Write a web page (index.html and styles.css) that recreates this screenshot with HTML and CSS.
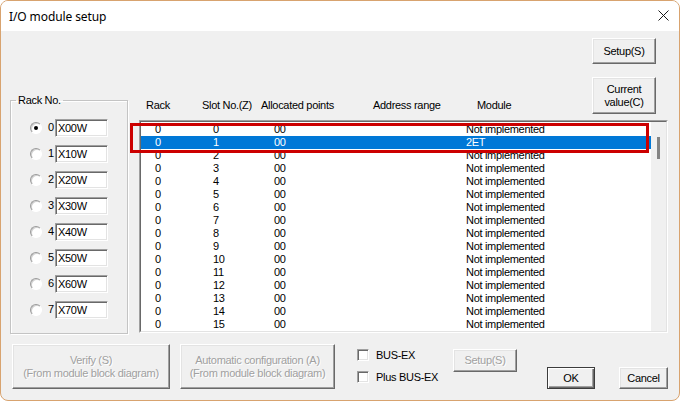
FILE: index.html
```html
<!DOCTYPE html>
<html>
<head>
<meta charset="utf-8">
<title>I/O module setup</title>
<link rel="stylesheet" href="styles.css">
</head>
<body>
<div class="window">
  <div class="titlebar">
    <span class="title">I/O module setup</span>
    <svg class="close" width="11" height="11" viewBox="0 0 11 11"><path d="M0.5 0.5 L10.5 10.5 M10.5 0.5 L0.5 10.5" stroke="#1a1a1a" stroke-width="1" fill="none"/></svg>
  </div>
  <div class="body">
    <div class="main-row">
      <fieldset class="rack-group">
        <legend>Rack No.</legend>
        <div class="rack-list">
          <div class="rack-row"><span class="radio checked"></span><span class="digit">0</span><span class="field">X00W</span></div>
          <div class="rack-row"><span class="radio"></span><span class="digit">1</span><span class="field">X10W</span></div>
          <div class="rack-row"><span class="radio"></span><span class="digit">2</span><span class="field">X20W</span></div>
          <div class="rack-row"><span class="radio"></span><span class="digit">3</span><span class="field">X30W</span></div>
          <div class="rack-row"><span class="radio"></span><span class="digit">4</span><span class="field">X40W</span></div>
          <div class="rack-row"><span class="radio"></span><span class="digit">5</span><span class="field">X50W</span></div>
          <div class="rack-row"><span class="radio"></span><span class="digit">6</span><span class="field">X60W</span></div>
          <div class="rack-row"><span class="radio"></span><span class="digit">7</span><span class="field">X70W</span></div>
        </div>
      </fieldset>
      <div class="main-col">
        <div class="top">
          <div class="header">
            <span>Rack</span><span>Slot No.(Z)</span><span>Allocated points</span><span>Address range</span><span>Module</span>
          </div>
          <div class="side-buttons">
            <button class="btn btn-setup">Setup(S)</button>
            <button class="btn btn-current">Current<br>value(C)</button>
          </div>
        </div>
        <div class="list">
          <div class="list-inner">
            <div class="rows">
              <div class="row"><span>0</span><span>0</span><span>00</span><span>Not implemented</span></div>
              <div class="row selected"><span>0</span><span>1</span><span>00</span><span>2ET</span></div>
              <div class="row"><span>0</span><span>2</span><span>00</span><span>Not implemented</span></div>
              <div class="row"><span>0</span><span>3</span><span>00</span><span>Not implemented</span></div>
              <div class="row"><span>0</span><span>4</span><span>00</span><span>Not implemented</span></div>
              <div class="row"><span>0</span><span>5</span><span>00</span><span>Not implemented</span></div>
              <div class="row"><span>0</span><span>6</span><span>00</span><span>Not implemented</span></div>
              <div class="row"><span>0</span><span>7</span><span>00</span><span>Not implemented</span></div>
              <div class="row"><span>0</span><span>8</span><span>00</span><span>Not implemented</span></div>
              <div class="row"><span>0</span><span>9</span><span>00</span><span>Not implemented</span></div>
              <div class="row"><span>0</span><span>10</span><span>00</span><span>Not implemented</span></div>
              <div class="row"><span>0</span><span>11</span><span>00</span><span>Not implemented</span></div>
              <div class="row"><span>0</span><span>12</span><span>00</span><span>Not implemented</span></div>
              <div class="row"><span>0</span><span>13</span><span>00</span><span>Not implemented</span></div>
              <div class="row"><span>0</span><span>14</span><span>00</span><span>Not implemented</span></div>
              <div class="row"><span>0</span><span>15</span><span>00</span><span>Not implemented</span></div>
            </div>
            <div class="scrollbar"><div class="thumb"></div></div>
          </div>
          <div class="mark"></div>
        </div>
      </div>
    </div>
    <div class="bottom-row">
      <button class="btn disabled btn-verify">Verify (S)<br>(From module block diagram)</button>
      <button class="btn disabled btn-auto">Automatic configuration (A)<br>(From module block diagram)</button>
      <div class="checks">
        <div class="check-row"><span class="checkbox"></span><span>BUS-EX</span></div>
        <div class="check-row"><span class="checkbox"></span><span>Plus BUS-EX</span></div>
      </div>
      <button class="btn disabled btn-setup2">Setup(S)</button>
      <button class="btn default btn-ok">OK</button>
      <button class="btn btn-cancel">Cancel</button>
    </div>
  </div>
</div>
</body>
</html>
```

FILE: styles.css
```css
html, body {
  margin: 0;
  padding: 0;
  background: #ffffff;
}

.window {
  width: 680px;
  height: 401px;
  box-sizing: border-box;
  border: 1px solid #d8a36f;
  border-radius: 8px;
  overflow: hidden;
  background: #f0f0f0;
  font-family: "Liberation Sans", Arial, sans-serif;
  font-size: 11px;
  letter-spacing: -0.3px;
  color: #000;
}

.titlebar {
  height: 30px;
  background: #ffffff;
  display: flex;
  align-items: center;
  justify-content: space-between;
  padding: 0 10px 0 8px;
}

.title {
  font-family: "Noto Sans", "Open Sans", sans-serif;
  font-size: 12px;
  letter-spacing: -0.1px;
  color: #000;
}

.close {
  display: block;
  margin-top: -1px;
}

.body {
  padding: 7px 11px 0 9px;
}

.main-row {
  display: flex;
  align-items: flex-start;
}

.rack-group {
  margin: 56px 0 0 0;
  padding: 12px 0 0 0;
  width: 118px;
  height: 240px;
  box-sizing: border-box;
  min-width: 0;
  border: 1px solid #c4c4c4;
  box-shadow: inset 1px 1px 0 #fff, 1px 1px 0 #fff;
}

.rack-group legend {
  padding: 0 2px;
  margin-left: 5px;
  line-height: 13px;
}

.rack-list {
  display: flex;
  flex-direction: column;
  gap: 8px;
  padding-left: 19px;
}

.rack-row {
  display: flex;
  align-items: center;
  height: 18px;
}

.radio {
  width: 12px;
  height: 12px;
  box-sizing: border-box;
  border-radius: 50%;
  border: 1px solid;
  border-color: #9a9a9a #ffffff #ffffff #9a9a9a;
  background: #ffffff;
  box-shadow: inset 1px 1px 0 #d0d0d0;
  position: relative;
  margin-right: 6px;
}

.radio.checked::after {
  content: "";
  position: absolute;
  left: 3px;
  top: 3px;
  width: 4px;
  height: 4px;
  border-radius: 50%;
  background: #000;
}

.digit {
  width: 6px;
  margin-right: 1px;
  line-height: 13px;
  margin-top: -1px;
}

.field {
  width: 53px;
  height: 18px;
  box-sizing: border-box;
  border: 1px solid;
  border-color: #a0a0a0 #ffffff #ffffff #a0a0a0;
  box-shadow: inset 1px 1px 0 #696969, inset -1px -1px 0 #e3e3e3;
  background: #ffffff;
  padding: 2px 0 0 2px;
  line-height: 13px;
}

.main-col {
  margin-left: 11px;
  width: 529px;
  display: flex;
  flex-direction: column;
}

.top {
  height: 76px;
  display: flex;
  align-items: flex-end;
}

.header {
  flex: 1;
  display: grid;
  grid-template-columns: 56px 59px 112px 104px auto;
  padding-left: 7px;
  line-height: 13px;
  margin-bottom: 2px;
}

.side-buttons {
  display: flex;
  flex-direction: column;
  gap: 13px;
  margin-right: 12px;
}

.btn {
  font-family: "Liberation Sans", Arial, sans-serif;
  font-size: 11px;
  letter-spacing: -0.3px;
  line-height: 13px;
  color: #000;
  background: #f0f0f0;
  border: 1px solid;
  border-color: #ffffff #696969 #696969 #ffffff;
  box-shadow: inset -1px -1px 0 #a0a0a0, inset 1px 1px 0 #e3e3e3;
  padding: 0;
  margin: 0;
  box-sizing: border-box;
  text-align: center;
}

.btn.disabled {
  color: #a0a0a0;
  text-shadow: 1px 1px 0 #ffffff;
}

.btn.default {
  border-color: #3c3c3c;
  box-shadow: inset 1px 1px 0 #ffffff, inset -1px -1px 0 #696969, inset -2px -2px 0 #a0a0a0;
}

.btn-setup { width: 64px; height: 26px; }
.btn-current { width: 64px; height: 37px; }

.list {
  position: relative;
  margin-top: 6px;
  height: 213px;
  box-sizing: border-box;
  border: 1px solid;
  border-color: #a0a0a0 #ffffff #ffffff #a0a0a0;
}

.list-inner {
  height: 100%;
  box-sizing: border-box;
  border: 1px solid;
  border-color: #696969 #e3e3e3 #e3e3e3 #696969;
  display: flex;
  background: #ffffff;
}

.rows {
  flex: 1;
  overflow: hidden;
  padding-top: 1px;
}

.row {
  display: grid;
  grid-template-columns: 58px 61px 192px auto;
  padding-left: 14px;
  height: 13px;
  line-height: 13px;
  white-space: nowrap;
}

.row.selected {
  background: #0078d7;
  color: #ffffff;
}

.scrollbar {
  width: 15px;
  background: #f0f0f0;
}

.thumb {
  width: 3px;
  height: 22px;
  background: #858585;
  margin: 15px 0 0 6px;
}

.mark {
  position: absolute;
  left: -10px;
  top: 2px;
  width: 519px;
  height: 30px;
  box-sizing: border-box;
  border: 3px solid #cc0000;
  pointer-events: none;
}

.bottom-row {
  display: flex;
  align-items: flex-start;
  margin-top: 10px;
}

.btn-verify { width: 158px; height: 45px; margin-left: 2px; }
.btn-auto { width: 155px; height: 45px; margin-left: 10px; }

.checks {
  width: 96px;
  margin-left: 22px;
  margin-top: 5px;
  display: flex;
  flex-direction: column;
  gap: 10px;
}

.check-row {
  display: flex;
  align-items: center;
  height: 12px;
  line-height: 13px;
  gap: 7px;
}

.checkbox {
  width: 12px;
  height: 12px;
  box-sizing: border-box;
  border: 1px solid;
  border-color: #a0a0a0 #ffffff #ffffff #a0a0a0;
  box-shadow: inset 1px 1px 0 #696969, inset -1px -1px 0 #e3e3e3;
  background: #ffffff;
}

.btn-setup2 { width: 64px; height: 23px; margin-top: 5px; }
.btn-ok { width: 48px; height: 22px; margin-top: 23px; margin-left: 30px; }
.btn-cancel { width: 49px; height: 22px; margin-top: 23px; margin-left: 24px; }
```
